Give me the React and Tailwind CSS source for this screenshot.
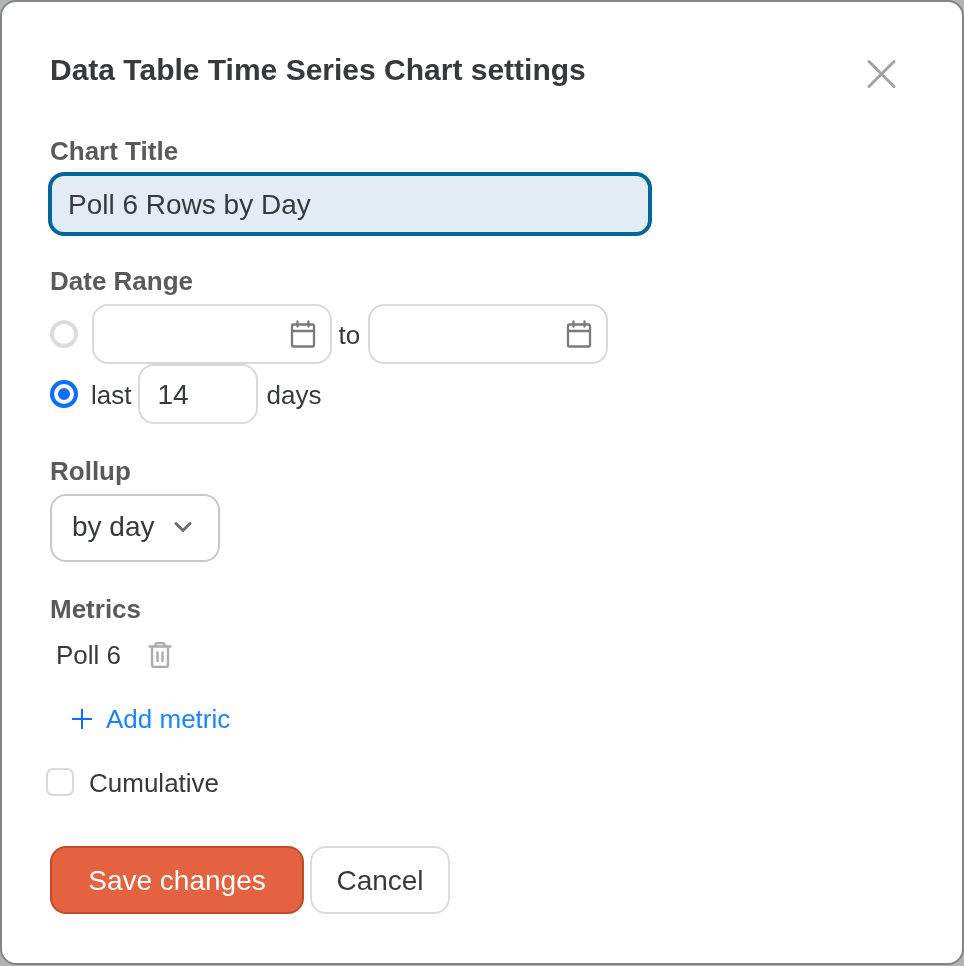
import React from "react";

function Calendar() {
  return (
    <svg width="26" height="28" viewBox="0 0 26 28" fill="none" stroke="#7a7a7a" strokeWidth="2.3" strokeLinejoin="round" strokeLinecap="round" className="absolute right-[14px] top-[14px]">
      <rect x="2" y="4.5" width="22" height="22" rx="1.5" />
      <path d="M2 11h22M7.5 1.5v5M18.5 1.5v5" />
    </svg>
  );
}

function DateBox() {
  return (
    <div className="relative h-[60px] w-[240px] rounded-[16px] border-2 border-[#d9d9d9] bg-white">
      <Calendar />
    </div>
  );
}

export default function App() {
  return (
    <div className="h-[966px] w-[964px] bg-[#b3b3b3] font-['Liberation_Sans',Arial,sans-serif] text-[#373a3c]">
      <div className="h-[965px] w-full rounded-[16px] border-2 border-[#808587] bg-white pl-[48px] pt-[48px] will-change-transform">
        <div className="relative flex h-[40px] items-center">
          <h1 className="text-[30px] leading-[40px] font-bold text-[#373a3c]">Data Table Time Series Chart settings</h1>
          <svg width="30" height="30" viewBox="0 0 30 30" className="absolute left-[816px] top-[9px]" fill="none" stroke="#a3a3a3" strokeWidth="3" strokeLinecap="round">
            <path d="M3 2.5l25 25M28 2.5l-25 25" />
          </svg>
        </div>

        <div className="mt-[43px] text-[26px] leading-[36px] font-bold text-[#5a5a5a]">Chart Title</div>
        <div className="mt-[3px] -ml-[2px] flex h-[64px] w-[604px] items-center rounded-[16px] border-[4px] border-[#006699] bg-[#e3ebf4] pl-[16px] pt-[2px] text-[28px] text-[#373a3c]">
          Poll 6 Rows by Day
        </div>

        <div className="mt-[27px] text-[26px] leading-[36px] font-bold text-[#5a5a5a]">Date Range</div>
        <div className="mt-[5px] flex h-[60px] items-center">
          <span className="h-[28px] w-[28px] rounded-full border-[4px] border-[#dcdcdc] bg-white" />
          <div className="ml-[14px]"><DateBox /></div>
          <span className="ml-[6.5px] mr-[5.5px] w-[24px] pt-[2px] text-[26px]">to</span>
          <DateBox />
        </div>
        <div className="flex h-[60px] items-center">
          <span className="flex h-[28px] w-[28px] items-center justify-center rounded-full bg-[#0d6efd]">
            <span className="h-[20px] w-[20px] rounded-full border-[4px] border-white bg-[#0d6efd]" />
          </span>
          <span className="ml-[13px] pt-[2px] text-[26px]">last</span>
          <div className="ml-[7px] flex h-[60px] w-[120px] items-center rounded-[16px] border-2 border-[#d9d9d9] pl-[17px] pt-[2px] text-[28px]">14</div>
          <span className="ml-[8px] pt-[2px] text-[26px]">days</span>
        </div>

        <div className="mt-[29px] text-[26px] leading-[36px] font-bold text-[#5a5a5a]">Rollup</div>
        <div className="mt-[5px] flex h-[68px] w-[170px] items-center rounded-[16px] border-2 border-[#c8c8c8] pb-[2px] pl-[20px] text-[28px]">
          by day
          <svg width="18" height="12" viewBox="0 0 18 12" fill="none" stroke="#6e6e6e" strokeWidth="3" strokeLinecap="round" strokeLinejoin="round" className="ml-[19px]">
            <path d="M2 2.5l7 7 7-7" />
          </svg>
        </div>

        <div className="mt-[29px] text-[26px] leading-[36px] font-bold text-[#5a5a5a]">Metrics</div>
        <div className="mt-[6px] flex h-[44px] items-center pl-[6px] text-[26px]">
          Poll 6
          <svg width="24" height="26" viewBox="0 0 24 26" fill="none" stroke="#ababab" strokeWidth="2.4" strokeLinejoin="round" strokeLinecap="round" className="ml-[27px]">
            <path d="M1.5 4.5h21M7.5 4.5V3a2 2 0 0 1 2-2h5a2 2 0 0 1 2 2v1.5M4 4.5V23a2 2 0 0 0 2 2h12a2 2 0 0 0 2-2V4.5M9.5 10.5v8.5M14.5 10.5v8.5" />
          </svg>
        </div>
        <div className="mt-[20px] flex h-[44px] items-center pl-[21px] text-[26px] text-[#1a85ff]">
          <svg width="22" height="22" viewBox="0 0 22 22" fill="none" stroke="#0d6efd" strokeWidth="2">
            <path d="M1 11h20M11 1v20" />
          </svg>
          <span className="ml-[13px]">Add metric</span>
        </div>
        <div className="mt-[20px] -ml-[4px] flex h-[44px] items-center text-[26px]">
          <span className="-mt-[2px] h-[28px] w-[28px] rounded-[7px] border-2 border-[#d9d9d9] bg-white" />
          <span className="ml-[15px]">Cumulative</span>
        </div>

        <div className="mt-[41px] flex gap-[6px]">
          <div className="flex h-[68px] w-[254px] items-center justify-center rounded-[16px] border-2 border-[#c4482a] bg-[#e56240] pt-[2px] text-[28px] text-white">Save changes</div>
          <div className="flex h-[68px] w-[140px] items-center justify-center rounded-[16px] border-2 border-[#dcdcdc] bg-white pt-[2px] text-[28px]">Cancel</div>
        </div>
      </div>
    </div>
  );
}
